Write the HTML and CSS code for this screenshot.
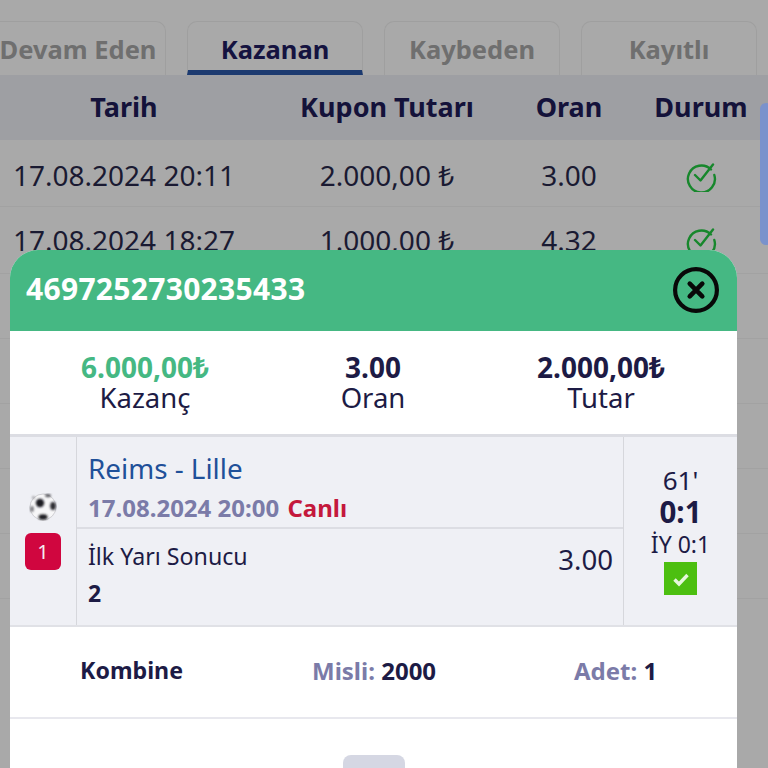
FILE: index.html
```html
<!DOCTYPE html>
<html lang="tr">
<head>
<meta charset="utf-8">
<title>Kuponlarım</title>
<link rel="stylesheet" href="styles.css">
</head>
<body>
<main class="page">
  <nav class="tabs">
    <div class="tab">Devam Eden</div>
    <div class="tab tab-active">Kazanan</div>
    <div class="tab">Kaybeden</div>
    <div class="tab">Kayıtlı</div>
  </nav>
  <div class="table">
    <div class="thead row-grid"><span>Tarih</span><span>Kupon Tutarı</span><span>Oran</span><span>Durum</span></div>
    <div class="trow row-grid"><span>17.08.2024 20:11</span><span>2.000,00 ₺</span><span>3.00</span><span class="status"><svg class="check-ring" viewBox="0 0 32 32"><path d="M26 9.5A13.5 13.5 0 1 0 29.3 15M10 15l5.5 5.5L28 4.5"/></svg></span></div>
    <div class="trow row-grid"><span>17.08.2024 18:27</span><span>1.000,00 ₺</span><span>4.32</span><span class="status"><svg class="check-ring" viewBox="0 0 32 32"><path d="M26 9.5A13.5 13.5 0 1 0 29.3 15M10 15l5.5 5.5L28 4.5"/></svg></span></div>
    <div class="trow row-grid trow-short"></div>
    <div class="trow row-grid trow-short"></div>
    <div class="trow row-grid trow-short"></div>
    <div class="trow row-grid trow-short"></div>
    <div class="trow row-grid trow-short"></div>
  </div>
</main>
<div class="scrollbar"></div>
<section class="modal">
  <header class="modal-head">
    <span class="coupon-id">4697252730235433</span>
    <svg class="close" viewBox="0 0 44 44"><circle cx="22" cy="22" r="20"/><path d="M16 16l12 12M28 16l-12 12"/></svg>
  </header>
  <div class="stats">
    <div class="stat"><b class="win">6.000,00₺</b><span>Kazanç</span></div>
    <div class="stat"><b>3.00</b><span>Oran</span></div>
    <div class="stat"><b>2.000,00₺</b><span>Tutar</span></div>
  </div>
  <div class="pick">
    <div class="pick-side">
      <svg class="ball" viewBox="0 0 28 28"><defs><filter id="soft" x="-20%" y="-20%" width="140%" height="140%"><feGaussianBlur stdDeviation="1.1"/></filter></defs><circle cx="14" cy="14" r="13" fill="#f7f7f8" stroke="#cfcfd3" stroke-width="1"/><g filter="url(#soft)"><circle cx="11" cy="10" r="4.2" fill="#1d1d22"/><ellipse cx="24" cy="13" rx="2.8" ry="4" fill="#2a2a30"/><ellipse cx="14" cy="24" rx="4.5" ry="2.8" fill="#1d1d22"/><ellipse cx="19" cy="2.6" rx="3" ry="1.6" fill="#55555b"/><ellipse cx="3" cy="16" rx="1.8" ry="3" fill="#77777c"/><circle cx="4.500" cy="4.500" r="1.600" fill="#a0a0a5"/></g></svg>
      <span class="badge">1</span>
    </div>
    <div class="pick-main">
      <div class="match">
        <div class="teams">Reims - Lille</div>
        <div class="when">17.08.2024 20:00 <span class="live">Canlı</span></div>
      </div>
      <div class="market">
        <div>
          <div class="market-name">İlk Yarı Sonucu</div>
          <div class="market-val">2</div>
        </div>
        <div class="market-odd">3.00</div>
      </div>
    </div>
    <div class="pick-score">
      <div class="minute">61'</div>
      <div class="score">0:1</div>
      <div class="half">İY 0:1</div>
      <div class="ok"><svg viewBox="0 0 20 20"><path d="M3.500 10.500l4.500 4.500 8.500-9"/></svg></div>
    </div>
  </div>
  <div class="summary">
    <b class="kombine">Kombine</b>
    <span class="misli"><i>Misli:</i> <b>2000</b></span>
    <span class="adet"><i>Adet:</i> <b>1</b></span>
  </div>
  <div class="foot"><div class="foot-btn"></div></div>
</section>
</body>
</html>
```
FILE: styles.css
```css
* { box-sizing: border-box; }
html, body { margin: 0; height: 768px; overflow: hidden; }
body { background: #a9a9a9; font-family: "Noto Sans", "Open Sans", sans-serif; color: #1d1b45; position: relative; width: 768px; }
.page { width: 768px; overflow: hidden; }
.tabs { display: flex; gap: 21px; padding: 21px 0 0; margin-left: -10px; height: 75px; width: 790px; }
.tab { width: 176px; flex: none; height: 54px; border: 1px solid #9f9f9f; border-bottom: 0; border-radius: 10px 10px 0 0; display: flex; align-items: center; justify-content: center; padding-top: 1px; font-size: 25.5px; font-weight: 700; color: #6f6f6f; }
.tab-active { color: #151340; border-bottom: 5px solid #1c3a70; padding-top: 6px; }
.table { width: 768px; }
.row-grid { display: grid; grid-template-columns: 248px 278px 86px 178px; width: 790px; text-align: center; align-items: center; }
.thead { height: 65px; padding-bottom: 2px; background: #9e9fa3; color: #14123a; font-size: 27px; font-weight: 700; }
.trow { height: 67px; border-bottom: 1px solid #a2a2a2; color: #1a1a32; font-size: 28px; padding-top: 3px; }
.trow + .trow { padding-top: 0; }
.trow-short { height: 65px; }
.status { display: flex; justify-content: center; padding-top: 2px; }
.check-ring { width: 32px; height: 32px; fill: none; stroke: #17872c; stroke-width: 2.4; stroke-linecap: round; stroke-linejoin: round; }
.scrollbar { position: absolute; left: 760px; top: 103px; width: 12px; height: 142px; border-radius: 6px; background: #7a92cc; }
.modal { position: absolute; left: 10px; top: 250px; width: 727px; height: 518px; background: #fff; border-radius: 28px 28px 0 0; overflow: hidden; }
.modal-head { height: 81px; background: #45b883; display: flex; align-items: center; justify-content: space-between; padding: 0 18px 0 16px; }
.coupon-id { color: #fff; font-size: 30px; font-weight: 700; letter-spacing: .3px; line-height: 77px; padding-bottom: 4px; }
.close { width: 46px; height: 46px; margin-bottom: 1px; fill: none; stroke: #080808; stroke-width: 4; }
.close path { stroke-width: 4.4; stroke-linecap: round; }
.stats { height: 103px; display: grid; grid-template-columns: repeat(3, 228px); padding-left: 21px; align-content: center; text-align: center; }
.stat { display: flex; flex-direction: column; line-height: 31px; font-size: 27.5px; }
.stat b { font-size: 28px; line-height: 30px; }
.win { color: #45b883; }
.pick { height: 193px; display: flex; background: #eff0f5; border-top: 3px solid #dcdde3; border-bottom: 2px solid #e0e1e6; }
.pick-side { width: 67px; flex: none; border-right: 1px solid #d6d7dc; display: flex; flex-direction: column; align-items: center; padding-top: 56px; gap: 12px; }
.ball { width: 28px; height: 28px; }
.badge { width: 36px; height: 37px; border-radius: 6px; background: #d0063f; color: #f4eef0; display: flex; align-items: center; justify-content: center; font-size: 20px; }
.pick-main { flex: 1; display: flex; flex-direction: column; min-width: 0; }
.match { height: 92px; border-bottom: 2px solid #dcdde3; padding: 11px 11px 0; }
.teams { color: #1f5099; font-size: 27.8px; line-height: 40px; }
.when { color: #7b7ba8; font-size: 24px; font-weight: 700; line-height: 38px; padding-top: 1px; }
.live { color: #c4183c; margin-left: 2px; }
.market { flex: 1; display: flex; justify-content: space-between; padding: 8px 10px 0 11px; }
.market-name { font-size: 23.2px; line-height: 38px; }
.market-val { font-size: 23px; font-weight: 700; line-height: 36px; }
.market-odd { font-size: 27.6px; line-height: 44px; }
.pick-score { width: 114px; flex: none; border-left: 1px solid #d6d7dc; display: flex; flex-direction: column; align-items: center; padding-top: 26px; }
.minute { font-size: 26px; line-height: 34px; }
.score { font-size: 29.500px; font-weight: 700; line-height: 30px; }
.half { font-size: 23px; line-height: 34px; }
.ok { width: 33px; height: 33px; margin-top: 1px; background: #4cbf10; display: flex; align-items: center; justify-content: center; }
.ok svg { width: 20px; height: 20px; fill: none; stroke: #e6f7dc; stroke-width: 3.4; }
.summary { height: 92px; display: grid; grid-template-columns: 232px 262px 1fr; padding: 0 0 4px 70px; align-items: center; font-size: 24px; border-bottom: 2px solid #e8e8ee; }
.kombine { font-size: 23.2px; }
.summary i { font-style: normal; font-weight: 700; color: #7b7ba8; }
.foot { display: flex; justify-content: center; padding-top: 36px; }
.foot-btn { width: 62px; height: 40px; border-radius: 8px; background: #d5d7e3; }
```
